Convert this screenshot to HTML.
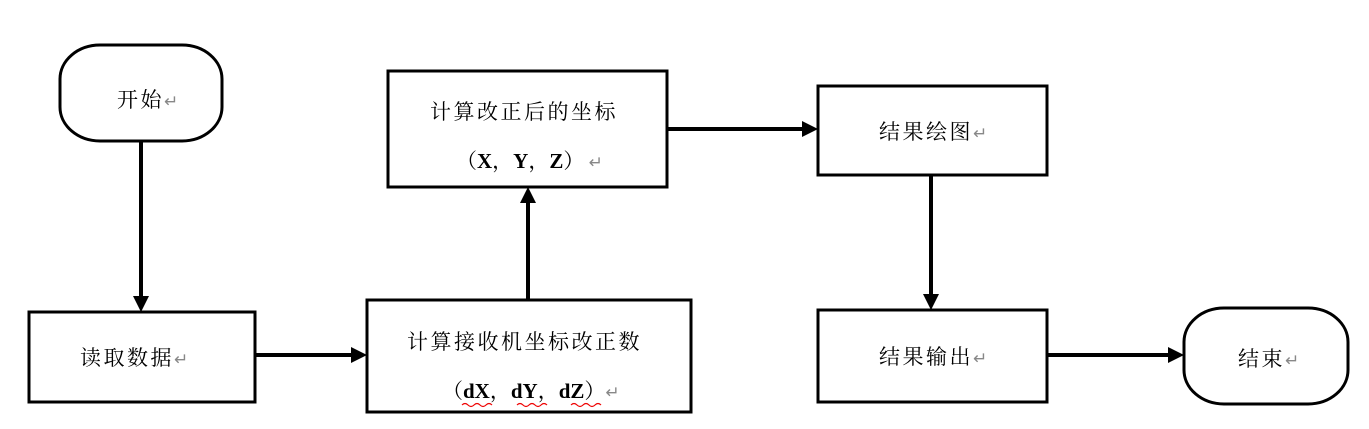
<!DOCTYPE html>
<html><head><meta charset="utf-8"><style>
html,body{margin:0;padding:0;background:#fff;width:1369px;height:429px;overflow:hidden}
text{font-family:"Liberation Serif","Noto Serif CJK SC",serif;font-size:21px;letter-spacing:2.5px;fill:#000}
text.b{letter-spacing:0;font-weight:bold}
.r{fill:#888;font-size:17px}
.p{font-family:"Noto Serif CJK SC",serif;font-weight:normal}
</style></head><body>
<svg width="1369" height="429" viewBox="0 0 1369 429" xmlns="http://www.w3.org/2000/svg">
<g fill="none" stroke="#000" stroke-width="3">
<rect x="60" y="45" width="162" height="96" rx="40" ry="34"/>
<rect x="29" y="312" width="226" height="90"/>
<rect x="367" y="300" width="324" height="112"/>
<rect x="388" y="71" width="279" height="116"/>
<rect x="818" y="86" width="229" height="89"/>
<rect x="818" y="310" width="229" height="92"/>
<rect x="1184" y="308" width="164" height="96" rx="40" ry="34"/>
<g stroke-width="4">
<line x1="141" y1="141" x2="141" y2="300"/>
<line x1="255" y1="355" x2="355" y2="355"/>
<line x1="528" y1="300" x2="528" y2="200"/>
<line x1="667" y1="129" x2="806" y2="129"/>
<line x1="931" y1="175" x2="931" y2="298"/>
<line x1="1047" y1="355" x2="1171" y2="355"/>
</g></g>
<g fill="#000">
<path d="M133,296 L149,296 L141,312 z"/>
<path d="M351,347 L351,363 L367,355 z"/>
<path d="M520,203 L536,203 L528,187 z"/>
<path d="M802,121 L802,137 L818,129 z"/>
<path d="M923,294 L939,294 L931,310 z"/>
<path d="M1168,347 L1168,363 L1184,355 z"/>
</g>
<text x="117" y="107">开始<tspan class="r">↵</tspan></text>
<text x="80" y="365">读取数据<tspan class="r">↵</tspan></text>
<text x="407" y="349">计算接收机坐标改正数</text>
<text class="b" x="442" y="398"><tspan class="p">（</tspan>dX<tspan class="p">，</tspan>dY<tspan class="p">，</tspan>dZ<tspan class="p">）</tspan><tspan class="r" font-weight="normal">↵</tspan></text>
<path d="M462,405 q3,-3 6,0 t6,0 t6,0 t6,0 t6,0 M517,405 q3,-3 6,0 t6,0 t6,0 t6,0 t6,0 M571,405 q3,-3 6,0 t6,0 t6,0 t6,0 t6,0" stroke="#e00" fill="none" stroke-width="1.2"/>
<text x="430" y="119">计算改正后的坐标</text>
<text class="b" x="456" y="168"><tspan class="p">（</tspan>X<tspan class="p">，</tspan>Y<tspan class="p">，</tspan>Z<tspan class="p">）</tspan><tspan class="r" font-weight="normal"> ↵</tspan></text>
<text x="879" y="139">结果绘图<tspan class="r">↵</tspan></text>
<text x="879" y="364">结果输出<tspan class="r">↵</tspan></text>
<text x="1238" y="366">结束<tspan class="r">↵</tspan></text>
</svg>
</body></html>
